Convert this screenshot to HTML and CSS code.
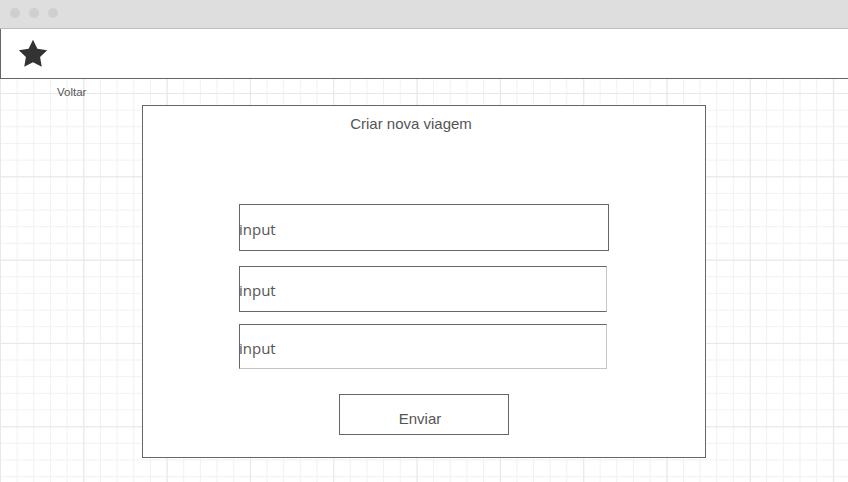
FILE: index.html
```html
<!DOCTYPE html>
<html>
<head>
<meta charset="utf-8">
<link rel="stylesheet" href="styles.css">
</head>
<body>
<div class="window">
  <div class="titlebar">
    <span class="dot"></span><span class="dot"></span><span class="dot"></span>
  </div>
  <div class="header">
    <svg class="star" viewBox="0 0 24 24" width="34" height="34"><path d="M12 2l3.09 6.26L22 9.27l-5 4.87 1.18 6.88L12 17.77l-6.18 3.25L7 14.14 2 9.27l6.91-1.01L12 2z" fill="#333"/></svg>
  </div>
  <div class="canvas">
    <div class="back">Voltar</div>
    <div class="panel">
      <div class="title">Criar nova viagem</div>
      <div class="field field-1">input</div>
      <div class="field field-2">input</div>
      <div class="field field-3">input</div>
      <div class="button">Enviar</div>
    </div>
  </div>
</div>
</body>
</html>
```

FILE: styles.css
```css
html, body {
  margin: 0;
  padding: 0;
  background: #fff;
}
body {
  width: 848px;
  height: 482px;
  overflow: hidden;
  font-family: "Liberation Sans", Arial, sans-serif;
  color: #444;
}
.window {
  display: flex;
  flex-direction: column;
  height: 482px;
}
.titlebar {
  background: #dedede;
  border-bottom: 1px solid #bdbdbd;
  display: flex;
  align-items: center;
  gap: 9px;
  padding-left: 10px;
  padding-bottom: 2px;
  box-sizing: border-box;
  height: 29px;
}
.dot {
  width: 10px;
  height: 10px;
  border-radius: 50%;
  background: #cfcfcf;
}
.header {
  height: 49px;
  background: #fff;
  border-left: 1px solid #666;
  border-bottom: 1px solid #666;
  display: flex;
  align-items: center;
  padding-left: 15px;
}
.star {
  display: block;
  margin-top: 0;
}
.canvas {
  flex: 1;
  display: flex;
  flex-direction: column;
  align-items: flex-start;
  background-color: #fff;
  background-image:
    linear-gradient(to right, #e8e8e8 1px, transparent 1px),
    linear-gradient(to bottom, #e8e8e8 1px, transparent 1px),
    linear-gradient(to right, #f1f1f1 1px, transparent 1px),
    linear-gradient(to bottom, #f1f1f1 1px, transparent 1px);
  background-size: 83.333px 83.333px, 83.333px 83.333px, 16.667px 16.667px, 16.667px 16.667px;
  background-position: 0 14px, 0 14px, 0 14px, 0 14px;
}
.back {
  margin: 7px 0 0 57px;
  font-size: 11.5px;
  line-height: 13px;
  color: #555;
}
.panel {
  margin: 6px 0 0 142px;
  width: 562px;
  height: 351px;
  border: 1px solid #666;
  background: #fff;
  display: flex;
  flex-direction: column;
  align-items: flex-start;
}
.title {
  align-self: stretch;
  text-align: center;
  font-size: 15px;
  line-height: 18px;
  margin-top: 9px;
  padding-right: 26px;
  color: #555;
}
.field {
  margin-left: 96px;
  box-sizing: border-box;
  border: 1px solid #666;
  display: flex;
  align-items: center;
  padding-top: 2px;
  text-indent: -1px;
  font-family: "Open Sans", "Liberation Sans", sans-serif;
  font-size: 15px;
  color: #555;
  background: #fff;
}
.field-1 {
  width: 370px;
  height: 47px;
  margin-top: 71px;
}
.field-2 {
  width: 368px;
  height: 46px;
  margin-top: 15px;
  border-right-color: #c4c4c4;
}
.field-3 {
  width: 368px;
  height: 45px;
  margin-top: 12px;
  border-right-color: #c4c4c4;
  border-bottom-color: #c4c4c4;
}
.button {
  margin: 25px 0 0 196px;
  width: 170px;
  height: 41px;
  box-sizing: border-box;
  border: 1px solid #666;
  display: flex;
  align-items: center;
  justify-content: center;
  padding-top: 8px;
  padding-right: 8px;
  font-size: 15px;
  color: #555;
}
```
